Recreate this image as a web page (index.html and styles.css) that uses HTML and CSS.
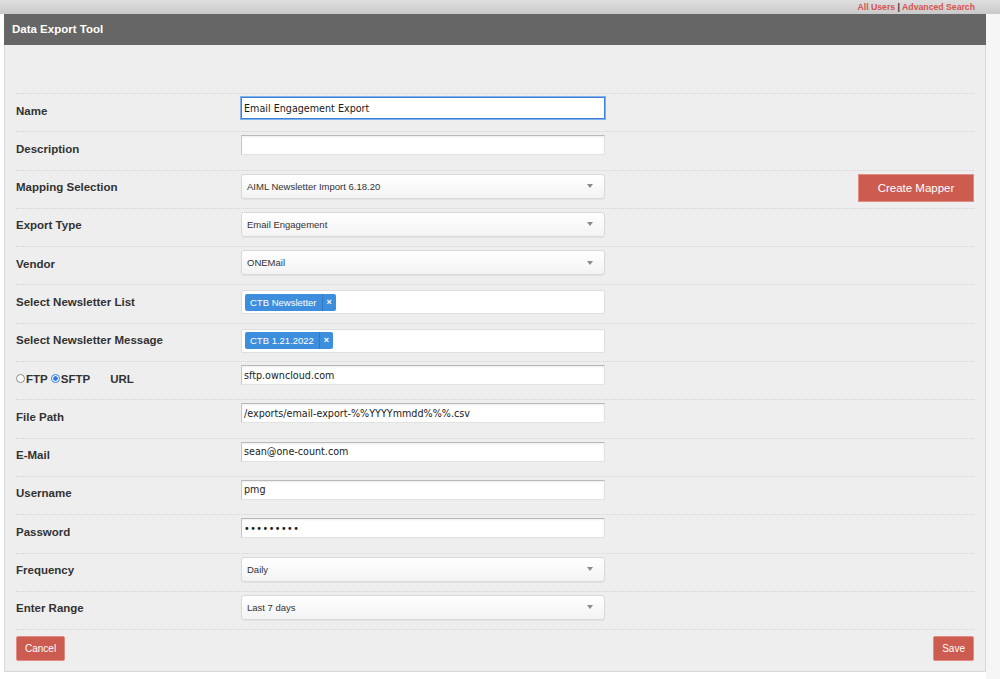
FILE: index.html
```html
<!DOCTYPE html>
<html>
<head>
<meta charset="utf-8">
<title>Data Export Tool</title>
<link rel="stylesheet" href="styles.css">
</head>
<body>
<div class="topbar">
  <div class="toplinks"><a href="#">All Users</a> <span class="pipe">|</span> <a href="#">Advanced Search</a></div>
</div>
<div class="page">
  <div class="panel">
    <div class="panel-head">Data Export Tool</div>
    <div class="panel-body">
      <div class="row">
        <div class="lbl">Name</div>
        <input class="txt focus" type="text" value="Email Engagement Export">
      </div>
      <div class="row">
        <div class="lbl">Description</div>
        <input class="txt" type="text" value="">
      </div>
      <div class="row">
        <div class="lbl">Mapping Selection</div>
        <div class="sel"><span>AIML Newsletter Import 6.18.20</span><i class="arrow"></i></div>
        <button class="btn btn-lg">Create Mapper</button>
      </div>
      <div class="row">
        <div class="lbl">Export Type</div>
        <div class="sel"><span>Email Engagement</span><i class="arrow"></i></div>
      </div>
      <div class="row">
        <div class="lbl">Vendor</div>
        <div class="sel"><span>ONEMail</span><i class="arrow"></i></div>
      </div>
      <div class="row">
        <div class="lbl">Select Newsletter List</div>
        <div class="tags"><span class="tag"><span class="tag-text">CTB Newsletter</span><span class="tag-x">×</span></span></div>
      </div>
      <div class="row">
        <div class="lbl">Select Newsletter Message</div>
        <div class="tags"><span class="tag"><span class="tag-text">CTB 1.21.2022</span><span class="tag-x">×</span></span></div>
      </div>
      <div class="row">
        <div class="lbl radios">
          <span class="radio"></span><span>FTP</span>
          <span class="radio on"></span><span>SFTP</span>
          <span class="url">URL</span>
        </div>
        <input class="txt" type="text" value="sftp.owncloud.com">
      </div>
      <div class="row">
        <div class="lbl">File Path</div>
        <input class="txt" type="text" value="/exports/email-export-%%YYYYmmdd%%%.csv">
      </div>
      <div class="row">
        <div class="lbl">E-Mail</div>
        <input class="txt" type="text" value="sean@one-count.com">
      </div>
      <div class="row">
        <div class="lbl">Username</div>
        <input class="txt" type="text" value="pmg">
      </div>
      <div class="row">
        <div class="lbl">Password</div>
        <input class="txt pw" type="password" value="secretpwd">
      </div>
      <div class="row">
        <div class="lbl">Frequency</div>
        <div class="sel"><span>Daily</span><i class="arrow"></i></div>
      </div>
      <div class="row">
        <div class="lbl">Enter Range</div>
        <div class="sel"><span>Last 7 days</span><i class="arrow"></i></div>
      </div>
      <div class="foot">
        <button class="btn">Cancel</button>
        <button class="btn">Save</button>
      </div>
    </div>
  </div>
  <div class="side"></div>
</div>
</body>
</html>
```
FILE: styles.css
```css
html, body {
  margin: 0;
  padding: 0;
  background: #ffffff;
  font-family: "Liberation Sans", Arial, sans-serif;
  color: #333;
}

.topbar {
  height: 14px;
  background: linear-gradient(#dedede, #c9c9c9);
  display: flex;
  justify-content: flex-end;
  align-items: center;
  padding-right: 25px;
}

.toplinks {
  font-size: 8.7px;
  font-weight: bold;
  line-height: 14px;
  color: #333;
}

.toplinks a {
  color: #d9534f;
  text-decoration: none;
}

.page {
  display: flex;
  min-height: 665px;
  padding-left: 4px;
}

.panel {
  width: 982px;
  box-sizing: border-box;
  border: 1px solid #d8d8d8;
  border-top: none;
  align-self: flex-start;
  background: #eeeeee;
}

.panel-head {
  height: 31px;
  background: #666666;
  color: #fff;
  font-weight: bold;
  font-size: 11.5px;
  line-height: 31px;
  padding-left: 8px;
  margin: 0 -1px;
}

.panel-body {
  padding: 48px 11px 10px 11px;
}

.side {
  flex: 1;
  background: #f6f6f6;
}

.row {
  display: grid;
  grid-template-columns: 225px 364px 1fr;
  align-items: start;
  height: 38.3px;
  box-sizing: border-box;
  border-top: 1px dotted #d4d4d4;
}

.lbl {
  font-size: 11.5px;
  font-weight: bold;
  color: #333;
  line-height: 14px;
  margin-top: 9.5px;
}

.txt {
  margin-top: 3px;
  width: 364px;
  height: 20px;
  box-sizing: border-box;
  border: 1px solid #e2e2e2;
  border-top-color: #b9b9b9;
  border-left-color: #c8c8c8;
  box-shadow: inset 0 1px 2px rgba(0,0,0,0.08);
  background: #fff;
  font-family: "DejaVu Sans", sans-serif;
  font-size: 9.6px;
  color: #1a1a1a;
  padding: 0 2px;
  outline: none;
}

.txt.focus {
  height: 22px;
  margin-top: 3px;
  border: 1px solid #3d84d8;
  box-shadow: 0 0 0 1px #7fb0ea;
}

.txt.pw {
  letter-spacing: 0.5px;
}

.sel {
  margin-top: 3px;
  height: 25px;
  box-sizing: border-box;
  border: 1px solid #d9d9d9;
  border-radius: 3px;
  background: linear-gradient(#ffffff, #f3f3f3);
  box-shadow: 0 1px 1px rgba(0,0,0,0.05);
  display: flex;
  align-items: center;
  justify-content: space-between;
  padding: 0 11px 0 5px;
  font-size: 9.5px;
  color: #333;
}

.arrow {
  width: 0;
  height: 0;
  border-left: 3.5px solid transparent;
  border-right: 3.5px solid transparent;
  border-top: 4px solid #8a8a8a;
}

.tags {
  margin-top: 5px;
  height: 24px;
  box-sizing: border-box;
  border: 1px solid #dedede;
  border-radius: 2px;
  background: #fff;
  display: flex;
  align-items: center;
  padding-left: 3px;
}

.tag {
  display: inline-flex;
  align-items: center;
  height: 17px;
  background: #3e8ede;
  border-radius: 2px;
  color: #fff;
  font-size: 9.5px;
}

.tag-text {
  padding: 0 5px 0 5px;
  line-height: 17px;
}

.tag-x {
  border-left: 1px solid #2f79c4;
  width: 13px;
  text-align: center;
  font-size: 9px;
  font-weight: bold;
  line-height: 17px;
}

.radios {
  display: flex;
  align-items: center;
}

.radio {
  width: 9px;
  height: 9px;
  box-sizing: border-box;
  border: 1px solid #8c8c8c;
  border-radius: 50%;
  background: #fff;
  margin-right: 1px;
}

.radio.on {
  border: 1px solid #2f7be0;
  background: radial-gradient(circle, #2f7be0 0 2px, #fff 2.5px);
  margin-left: 3px;
}

.url {
  margin-left: 20px;
}

.btn {
  border: 1px solid #e08b83;
  background: #cc5b50;
  color: #fff;
  font-family: "Liberation Sans", Arial, sans-serif;
  font-size: 10px;
  border-radius: 2px;
  height: 25px;
  padding: 0 8px;
  cursor: pointer;
}

.btn-lg {
  justify-self: end;
  margin-top: 3px;
  height: 28px;
  width: 116px;
  font-size: 11.5px;
  border-radius: 0;
}

.foot {
  border-top: 1px dotted #d4d4d4;
  display: flex;
  justify-content: space-between;
  padding-top: 6px;
}
```
